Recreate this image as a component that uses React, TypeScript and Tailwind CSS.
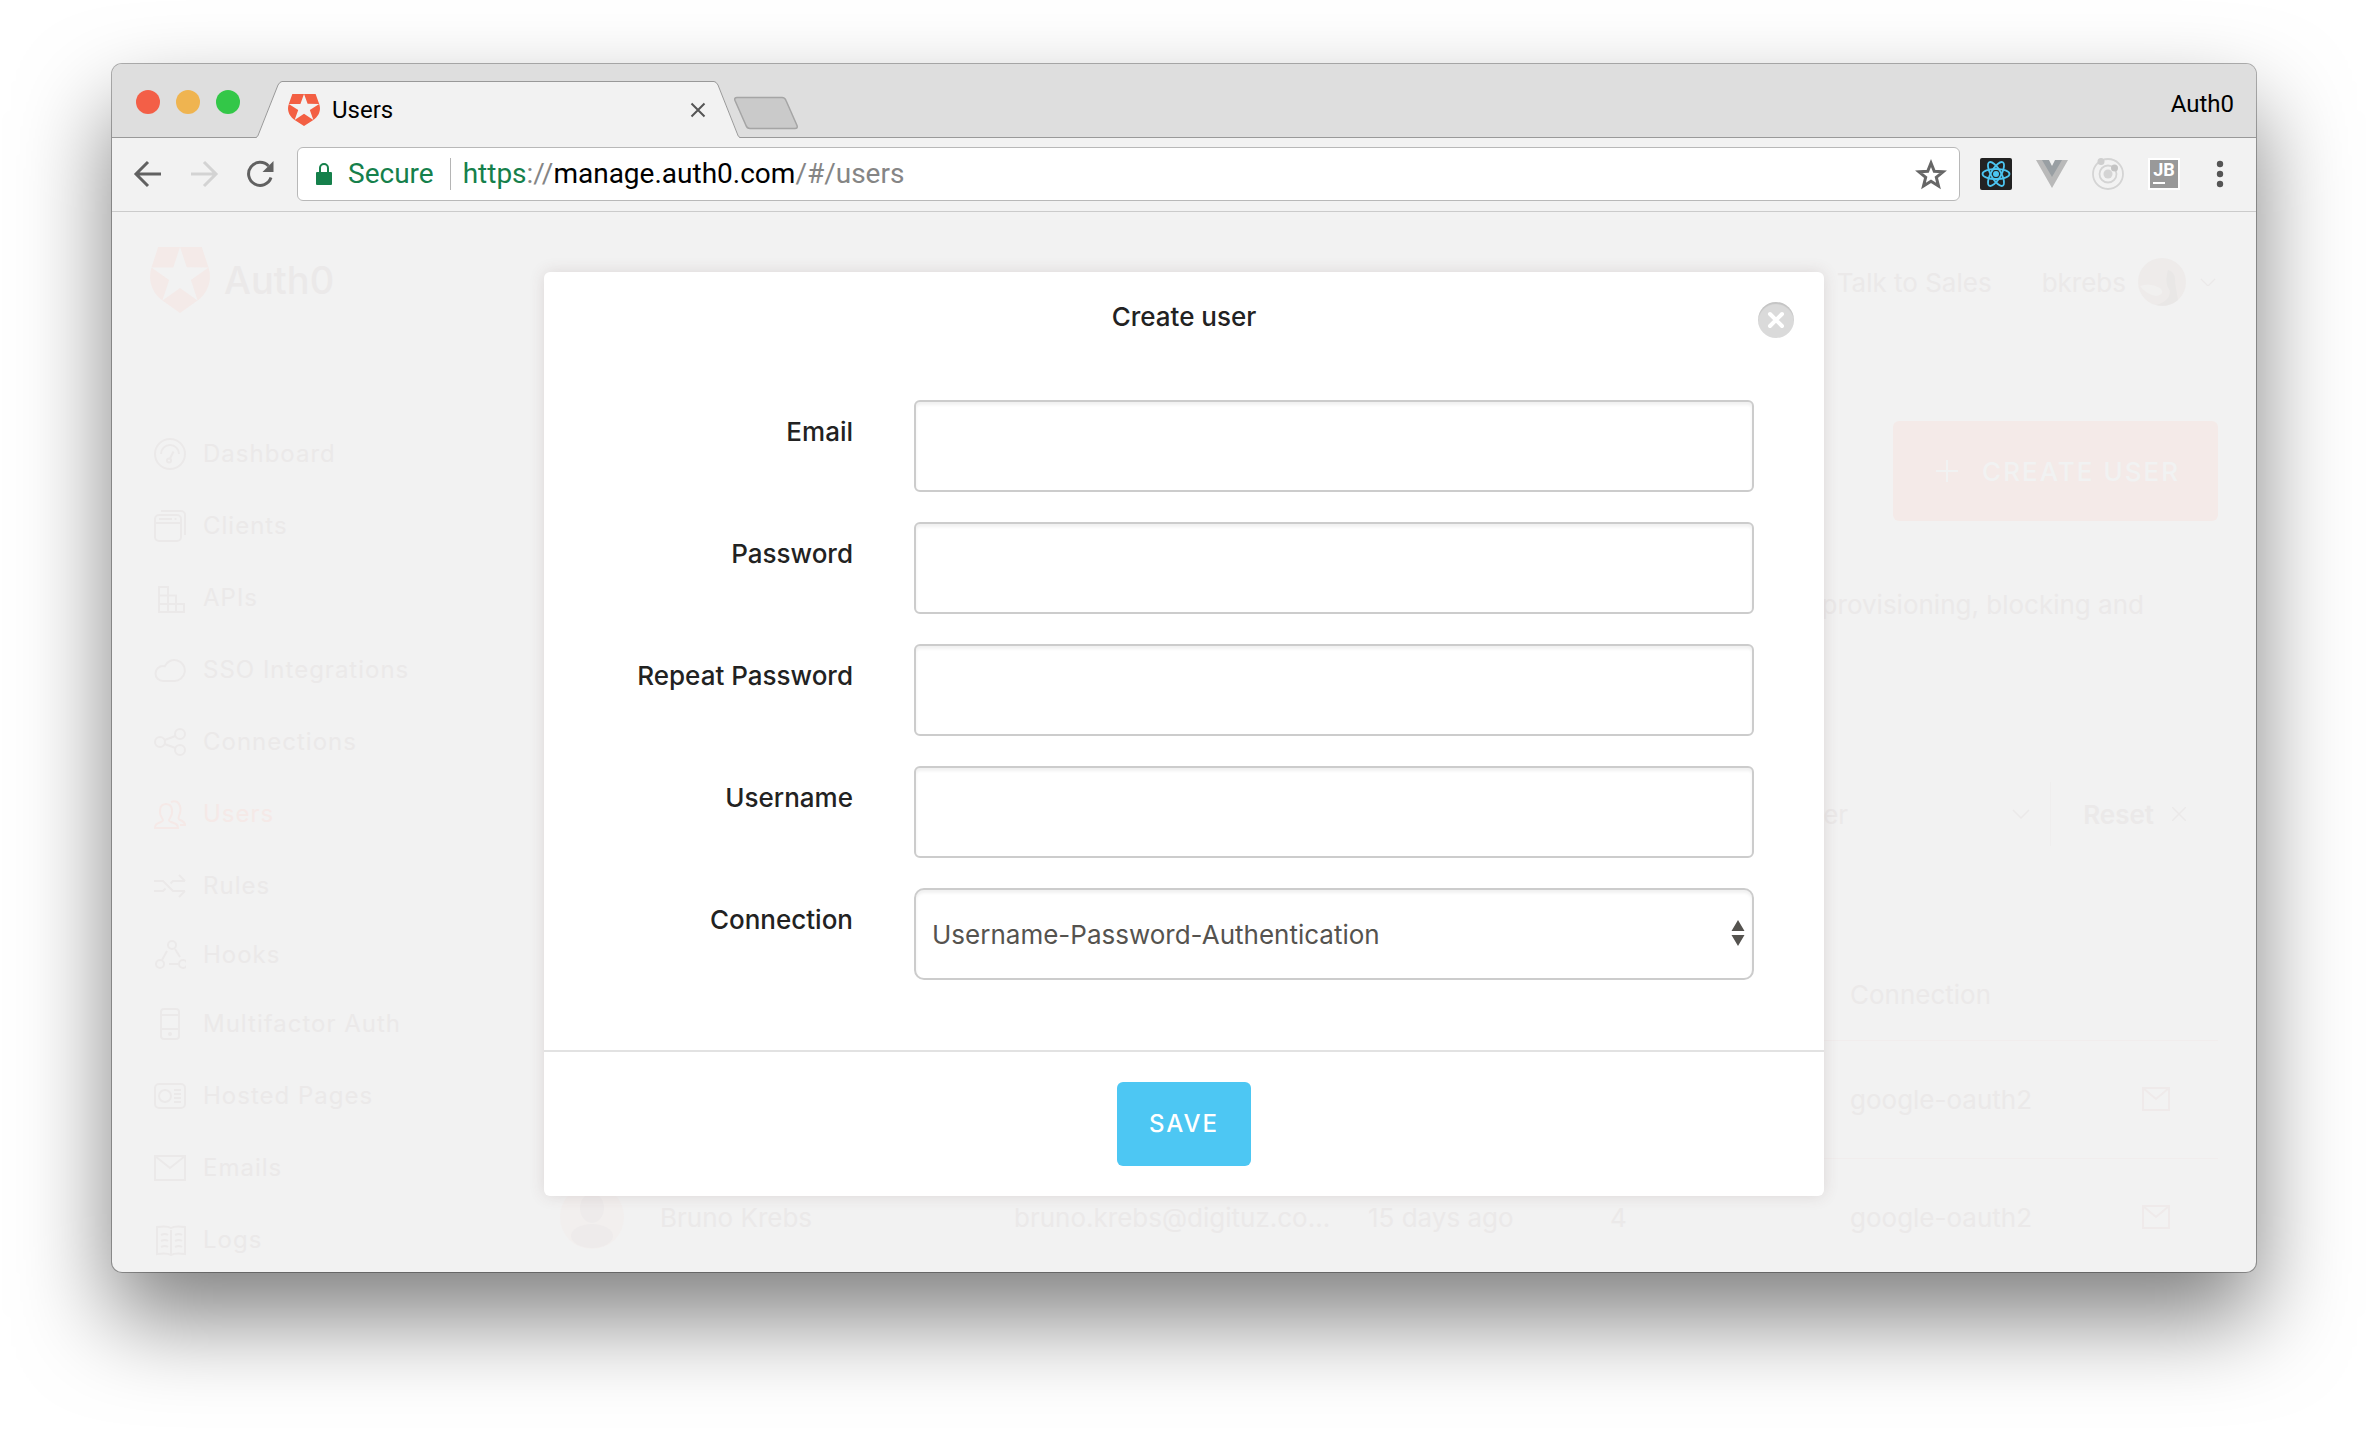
import { clsx } from "clsx";
import type { ReactNode } from "react";

interface NavItem {
  label: string;
  icon: ReactNode;
  active?: boolean;
  compact?: boolean;
}

interface UserRow {
  id: number;
  name: string;
  email?: string;
  latest: string;
  logins: number;
  connection: string;
}

const navItems: NavItem[] = [
  {
    label: "Dashboard",
    icon: (
      <>
        <circle cx="16" cy="16" r="15" />
        <path d="M7 16a9 9 0 0 1 18 0M19.500 13.500l-3.500 7" />
        <circle cx="15" cy="22.500" r="2" />
      </>
    ),
  },
  {
    label: "Clients",
    icon: (
      <>
        <rect x="1" y="5" width="26" height="26" rx="4" />
        <path d="M1 13h26M5 9h13M20.500 9h2M7 1h20a4 4 0 0 1 4 4v20" />
      </>
    ),
  },
  {
    label: "APIs",
    icon: <path d="M5 5h9v25H5zM5 13.500h17V30M5 22h25v8H5M14 13.500V30" />,
  },
  {
    label: "SSO Integrations",
    icon: <path d="M9 27a7.500 7.500 0 0 1 0-15c.6 0 1.200.1 1.700.3A10.500 10.500 0 1 1 20 27z" />,
  },
  {
    label: "Connections",
    icon: (
      <>
        <circle cx="6" cy="16" r="5" />
        <circle cx="26" cy="8" r="5" />
        <circle cx="26" cy="24" r="5" />
        <path d="M10.600 14l10.800-4M10.600 18l10.800 4" />
      </>
    ),
  },
  {
    label: "Users",
    active: true,
    icon: (
      <>
        <path d="M1 30c0-4 2-4.500 6-6 2.500-1 2.500-2 1-4-3-4-3.500-14 4-14s7 10 4 14c-1.500 2-1.500 3 1 4 4 1.500 7 2 7 6z" />
        <path d="M17 4c8-3 10.500 5 9 11-1 4-3 5.500 0 7 3 1.500 5 1.500 5 5h-5" />
      </>
    ),
  },
  {
    label: "Rules",
    icon: (
      <path d="M0 11h9l10 10h12M0 21h9l2.500-2.500M16.500 13.500L19 11h12M25 5l6 6M25 27l6-6" />
    ),
  },
  {
    label: "Hooks",
    compact: true,
    icon: (
      <>
        <circle cx="18" cy="6" r="4" />
        <circle cx="6" cy="25" r="4" />
        <circle cx="29" cy="25" r="4" />
        <path d="M13 12l-5 9M21 10l5 8M15 25h10" />
      </>
    ),
  },
  {
    label: "Multifactor Auth",
    icon: (
      <>
        <rect x="7" y="1" width="18" height="30" rx="3" />
        <path d="M7 7h18M7 21h18" />
        <circle cx="16" cy="26" r="1" />
      </>
    ),
  },
  {
    label: "Hosted Pages",
    icon: (
      <>
        <rect x="1" y="4" width="30" height="24" rx="4" />
        <circle cx="11" cy="16" r="6" />
        <path d="M20 10h7M20 14h7M20 18h7M20 22h7" />
      </>
    ),
  },
  {
    label: "Emails",
    icon: <path d="M1 4h30v24H1zM1 4l15 12L31 4" />,
  },
  {
    label: "Logs",
    icon: (
      <>
        <path d="M17 4c-3-2-7-2-14-1v27c7-1 11-1 14 1 3-2 7-2 14-1V3c-7-1-11-1-14 1zM17 6v24" />
        <path d="M7 11q4-2 7 0M7 17q4-2 7 0M7 23q4-2 7 0M21 11q4-2 7 0M21 17q4-2 7 0M21 23q4-2 7 0" />
      </>
    ),
  },
];

const users: UserRow[] = [
  {
    id: 1,
    name: "Bruno Krebs",
    latest: "2 days ago",
    logins: 12,
    connection: "google-oauth2",
  },
  {
    id: 2,
    name: "Bruno Krebs",
    email: "bruno.krebs@digituz.co...",
    latest: "15 days ago",
    logins: 4,
    connection: "google-oauth2",
  },
];

const fields = [
  { id: "email", label: "Email", type: "email" },
  { id: "password", label: "Password", type: "password" },
  { id: "repeat-password", label: "Repeat Password", type: "password" },
  { id: "username", label: "Username", type: "text" },
];

function Shield({ className }: { className?: string }) {
  return (
    <svg viewBox="1.500 0 21 24" preserveAspectRatio="none" fill="currentColor" className={className} aria-hidden="true">
      <path d="M21.980 7.448L19.620 0H4.347L2.020 7.448c-1.352 4.312.03 9.206 3.815 12.015L12.007 24l6.157-4.552c3.755-2.810 5.182-7.688 3.815-12.015l-6.160 4.580 2.343 7.450-6.157-4.597-6.158 4.580 2.358-7.433-6.188-4.550 7.630-.045L12.008 0l2.356 7.404 7.615.044z" />
    </svg>
  );
}

function Chevron({ className }: { className?: string }) {
  return (
    <svg viewBox="0 0 18 10" fill="none" stroke="currentColor" strokeWidth="1.500" className={className} aria-hidden="true">
      <path d="M1 1l8 8 8-8" />
    </svg>
  );
}

function TitleBar() {
  return (
    <div className="flex h-[74px] shrink-0 items-end bg-[#dedede] shadow-[inset_0_-1px_0_#999]">
      <div className="flex h-full w-36 items-center gap-4 pt-0.5 pl-6">
        <span className="size-6 rounded-full bg-[#f35f47]" />
        <span className="size-6 rounded-full bg-[#efb450]" />
        <span className="size-6 rounded-full bg-[#33c748]" />
      </div>

      <div className="flex h-[57px]">
        <svg width="26" height="57" viewBox="0 0 26 57" aria-hidden="true">
          <path d="M0 57L1 56 22 4Q24 .5 26 .5V57z" fill="#f2f2f2" />
          <path d="M0 56.500Q2 56 3 52L22 4Q24 .5 26 .5" fill="none" stroke="#999" />
        </svg>
        <div className="flex w-[432px] items-center border-t border-[#999] bg-[#f2f2f2] pl-1.5 pr-1">
          <Shield className="h-8 w-8 text-[#f35f43]" />
          <span className="ml-3 flex-1 text-2xl">Users</span>
          <button type="button" aria-label="Close tab" className="p-1 text-[#555]">
            <svg width="16" height="16" viewBox="0 0 16 16" fill="none" stroke="currentColor" strokeWidth="2" className="block">
              <path d="M1.500 1.500l13 13M14.500 1.500l-13 13" />
            </svg>
          </button>
        </div>
        <svg width="26" height="57" viewBox="0 0 26 57" aria-hidden="true">
          <path d="M26 57L25 56 4 4Q2 .5 0 .5V57z" fill="#f2f2f2" />
          <path d="M26 56.500Q24 56 23 52L4 4Q2 .5 0 .5" fill="none" stroke="#999" />
        </svg>
      </div>

      <button type="button" aria-label="New tab" className="mb-2 -ml-2">
        <svg width="68" height="34" viewBox="0 0 68 34" className="block">
          <path d="M5 1.500h45q3 0 4 3l11 25q1 3-2 3H18q-3 0-4-3L3 4.500q-1-3 2-3z" fill="#cacaca" stroke="#a5a5a5" strokeWidth="1.500" />
        </svg>
      </button>

      <span className="ml-auto flex h-full items-center pt-1.5 pr-[22px] text-2xl text-black">Auth0</span>
    </div>
  );
}

function Toolbar() {
  return (
    <div className="flex h-[74px] shrink-0 items-center border-b border-[#cbcbcb] bg-[#f2f2f2] pb-0.5 pl-5 pr-7">
      <div className="flex items-center gap-6">
        <button type="button" aria-label="Back" className="text-[#616161]">
          <svg width="32" height="32" viewBox="0 0 32 32" fill="none" stroke="currentColor" strokeWidth="3" className="block">
            <path d="M29 16H5M16 4L4 16l12 12" />
          </svg>
        </button>
        <button type="button" aria-label="Forward" className="text-[#d3d3d3]">
          <svg width="32" height="32" viewBox="0 0 32 32" fill="none" stroke="currentColor" strokeWidth="3" className="block">
            <path d="M3 16h24M16 4l12 12-12 12" />
          </svg>
        </button>
        <button type="button" aria-label="Reload" className="text-[#616161]">
          <svg width="32" height="32" viewBox="0 0 32 32" fill="none" stroke="currentColor" strokeWidth="3" className="block">
            <path d="M27 19.500A11.500 11.500 0 1 1 24.500 8" />
            <path d="M29.500 3v11h-11z" fill="currentColor" stroke="none" />
          </svg>
        </button>
      </div>

      <div className="ml-[21px] flex h-[54px] flex-1 items-center rounded-md border border-[#b8b8b8] bg-white pl-[18px] pr-3 text-[28px]">
        <svg width="16" height="24" viewBox="0 0 16 24" aria-hidden="true">
          <rect y="10" width="16" height="13" rx="1" fill="#15804b" />
          <path d="M4 11V6a4 4 0 0 1 8 0v5" fill="none" stroke="#15804b" strokeWidth="2" />
        </svg>
        <span className="ml-4 text-[#15804b]">Secure</span>
        <span className="mr-3 ml-4 h-8 w-px bg-[#b5b5b5]" />
        <span className="text-[#858585]">
          <span className="text-[#15804b]">https</span>://
          <span className="text-black">manage.auth0.com</span>/#/users
        </span>
        <button type="button" aria-label="Bookmark this page" className="ml-auto text-[#666]">
          <svg width="32" height="32" viewBox="0 0 32 32" fill="none" stroke="currentColor" strokeWidth="3" className="block">
            <path d="M16 5l3.300 8.200 8.800.6-6.800 5.600 2.200 8.600L16 23.300 8.500 28l2.200-8.600-6.800-5.600 8.800-.6z" />
          </svg>
        </button>
      </div>

      <div className="ml-5 flex items-center gap-6">
        <svg width="32" height="32" viewBox="0 0 32 32" aria-hidden="true">
          <rect width="32" height="32" rx="2" fill="#222" />
          <g fill="none" stroke="#4cc5f1" strokeWidth="1.800">
            <ellipse cx="16" cy="16" rx="13.500" ry="5" />
            <ellipse cx="16" cy="16" rx="13.500" ry="5" transform="rotate(60 16 16)" />
            <ellipse cx="16" cy="16" rx="13.500" ry="5" transform="rotate(120 16 16)" />
          </g>
          <circle cx="16" cy="16" r="3" fill="#4cc5f1" />
        </svg>
        <svg width="32" height="32" viewBox="0 0 32 32" aria-hidden="true">
          <path d="M0 2h12l4 7 4-7h12L16 30z" fill="#b9b9b9" />
          <path d="M6 2h7l3 6 3-6h7L16 19z" fill="#999fa3" />
        </svg>
        <svg width="32" height="32" viewBox="0 0 32 32" fill="none" stroke="#d4d4d4" strokeWidth="1.800" aria-hidden="true">
          <circle cx="16" cy="16" r="15" />
          <circle cx="16" cy="16" r="8.500" />
          <circle cx="16" cy="16" r="4.500" fill="#d4d4d4" stroke="none" />
          <circle cx="9" cy="3.500" r="3.500" fill="#cfcfcf" stroke="none" />
          <circle cx="22.500" cy="10" r="3.500" fill="#c4c4c4" stroke="none" />
        </svg>
        <span className="flex size-8 flex-col border-2 border-white bg-[#999] px-[3px] text-white">
          <span className="text-center text-[18px] leading-5 font-bold">JB</span>
          <span className="mt-0.5 h-0.5 w-3 bg-white" />
        </span>
      </div>
      <button type="button" aria-label="Menu" className="ml-8 px-1 text-[#555]">
        <svg width="8" height="28" viewBox="0 0 8 28" fill="currentColor" className="block">
          <circle cx="4" cy="4" r="3.200" />
          <circle cx="4" cy="14" r="3.200" />
          <circle cx="4" cy="24" r="3.200" />
        </svg>
      </button>
    </div>
  );
}

function PageHeader() {
  return (
    <header className="flex h-[140px] items-center pl-[38px] pr-10">
      <a href="#/" className="flex w-[411px] items-center gap-3.5 pb-1">
        <Shield className="h-[66px] w-[60px] text-[#f4eae8]" />
        <span className="text-[38px] font-medium">Auth0</span>
      </a>
      <label className="flex items-center gap-5">
        <svg width="20" height="20" viewBox="0 0 20 20" fill="none" stroke="currentColor" strokeWidth="2" aria-hidden="true">
          <circle cx="8" cy="8" r="7" />
          <path d="M13 13l6 6" />
        </svg>
        <input aria-label="Search" className="w-96" />
      </label>
      <div className="ml-auto flex items-center">
        <a href="#/sales">Talk to Sales</a>
        <button type="button" className="ml-[50px] flex items-center">
          bkrebs
          <svg width="48" height="48" viewBox="0 0 48 48" className="ml-3" aria-hidden="true">
            <circle cx="24" cy="24" r="24" fill="#eeebea" />
            <path d="M30 12q8 2 7 12l3 18q-10 8-22 5 14-4 14-14-6-8-2-21z" fill="#e9e7e6" />
            <path d="M2 28q10-4 20 2 6 6-4 8-10-2-16-10z" fill="#f1f0ef" />
          </svg>
          <Chevron className="ml-3.5 w-4" />
        </button>
      </div>
    </header>
  );
}

function Sidebar() {
  return (
    <nav className="w-[448px] shrink-0 pt-[66px] pl-[42px] text-2xl">
      {navItems.map((item) => (
        <a
          key={item.label}
          href="#/"
          className={clsx(
            "flex items-center gap-[17px] tracking-[1px]",
            item.compact ? "h-[66px]" : "h-[72px]",
            item.active && "text-[#f5e9e7]"
          )}
        >
          <svg width="32" height="32" viewBox="0 0 32 32" fill="none" stroke="currentColor" strokeWidth="2" aria-hidden="true">
            {item.icon}
          </svg>
          {item.label}
        </a>
      ))}
    </nav>
  );
}

function UsersPage() {
  return (
    <main className="min-w-0 flex-1 pt-[69px] pr-[38px]">
      <div className="flex h-[100px] items-center justify-between">
        <h1 className="text-5xl">Users</h1>
        <button
          type="button"
          className="flex h-full items-center gap-6 rounded-md bg-[#f4eae8] pl-[43px] pr-[38px] font-medium tracking-[2px] text-[#f1f2f2]"
        >
          <svg width="22" height="22" viewBox="0 0 22 22" stroke="currentColor" strokeWidth="2" aria-hidden="true">
            <path d="M11 0v22M0 11h22" />
          </svg>
          CREATE USER
        </button>
      </div>

      <p className="mt-16 pr-[74px] text-right leading-10">creating and provisioning, blocking and</p>

      <div className="mt-[157px] flex h-16 items-center justify-end">
        <button type="button" className="flex items-center">
          User
          <Chevron className="ml-[164px] w-[18px]" />
        </button>
        <span className="mr-8 ml-5 h-full w-px bg-[#efeeee]" />
        <button type="button" className="flex items-center gap-[18px] pr-8 font-semibold">
          Reset
          <svg width="14" height="14" viewBox="0 0 14 14" stroke="currentColor" strokeWidth="1.500" aria-hidden="true">
            <path d="M0 0l14 14M14 0L0 14" />
          </svg>
        </button>
      </div>

      <table className="mt-[76px] w-full table-fixed text-left">
        <thead>
          <tr className="h-[118px] border-b border-[#f1eded]">
            <th className="w-[100px]"></th>
            <th className="pt-7 font-normal">Name</th>
            <th className="w-[354px] pt-7 font-normal">Email</th>
            <th className="w-[242px] pt-7 font-normal">Latest Login</th>
            <th className="w-[240px] pt-7 font-normal">Logins</th>
            <th className="w-[292px] pt-7 font-normal">Connection</th>
            <th className="w-[76px]"></th>
          </tr>
        </thead>
        <tbody>
          {users.map((user) => (
            <tr key={user.id} className="h-[118px] border-b border-[#f1eded]">
              <td>
                <svg width="64" height="64" viewBox="0 0 64 64" aria-hidden="true">
                  <circle cx="32" cy="32" r="32" fill="#f2efee" />
                  <ellipse cx="32" cy="23" rx="12" ry="15" fill="#eeebeb" />
                  <ellipse cx="32" cy="51" rx="21" ry="12" fill="#eeebeb" />
                </svg>
              </td>
              <td>
                <a href="#/users">{user.name}</a>
              </td>
              <td className="whitespace-nowrap">{user.email}</td>
              <td>{user.latest}</td>
              <td>{user.logins}</td>
              <td>{user.connection}</td>
              <td>
                <svg width="28" height="24" viewBox="0 0 28 24" fill="none" stroke="#efeaea" strokeWidth="2" aria-hidden="true">
                  <path d="M1 1h26v22H1zM1 1l13 11L27 1" />
                </svg>
              </td>
            </tr>
          ))}
        </tbody>
      </table>
    </main>
  );
}

function CreateUserModal() {
  const controlClass =
    "h-[92px] w-full border-2 border-[#ccc] bg-white px-4 text-[#55534f] shadow-[inset_0_3px_3px_rgba(0,0,0,0.06)]";

  return (
    <form
      role="dialog"
      aria-labelledby="modal-title"
      className="w-full max-w-[1280px] rounded-md bg-white text-[#222] shadow-[0_0_16px_rgba(90,60,60,0.14)]"
    >
      <div className="relative flex h-24 items-center justify-center">
        <h2 id="modal-title" className="pb-2 font-medium">
          Create user
        </h2>
        <button
          type="button"
          aria-label="Close"
          className="absolute top-[30px] right-[30px] flex size-9 items-center justify-center rounded-full bg-[#dadada] text-white shadow-[inset_0_2px_1px_rgba(0,0,0,0.1)]"
        >
          <svg width="18" height="18" viewBox="0 0 18 18" fill="none" stroke="currentColor" strokeWidth="4" strokeLinecap="round">
            <path d="M3 3l12 12M15 3L3 15" />
          </svg>
        </button>
      </div>

      <div className="flex flex-col gap-[30px] pt-8 pr-[70px] pb-[70px]">
        {fields.map((field) => (
          <div key={field.id} className="grid grid-cols-[309px_1fr] gap-[61px]">
            <label htmlFor={field.id} className="pt-4 text-right leading-8 font-medium">
              {field.label}
            </label>
            <input id={field.id} type={field.type} className={clsx(controlClass, "rounded-md")} />
          </div>
        ))}
        <div className="grid grid-cols-[309px_1fr] gap-[61px]">
          <label htmlFor="connection" className="pt-4 text-right leading-8 font-medium">
            Connection
          </label>
          <div className="relative">
            <select id="connection" className={clsx(controlClass, "block appearance-none rounded-[10px]")}>
              <option>Username-Password-Authentication</option>
            </select>
            <svg width="14" height="26" viewBox="0 0 14 26" fill="#55534f" className="pointer-events-none absolute top-8 right-[9px]" aria-hidden="true">
              <path d="M7 0l6.500 11H.5zM7 26L.5 15h13z" />
            </svg>
          </div>
        </div>
      </div>

      <div className="flex justify-center border-t-2 border-[#e2e2e2] py-[30px]">
        <button type="submit" className="h-[84px] rounded-md bg-[#4dc7f3] px-8 text-2xl font-medium tracking-[2px] text-white">
          SAVE
        </button>
      </div>
    </form>
  );
}

export default function App() {
  return (
    <div className="flex h-screen min-h-[1200px] flex-col bg-white px-28 pt-16 pb-40 font-[Roboto,sans-serif]">
      <div className="flex min-h-0 flex-1 flex-col overflow-hidden rounded-[10px] bg-[#f2f2f2] shadow-[0_0_0_1px_rgba(0,0,0,0.3),0_46px_92px_rgba(0,0,0,0.5)]">
        <TitleBar />
        <Toolbar />
        <div className="relative min-h-0 flex-1 overflow-hidden font-[Inter,sans-serif] text-[26px] text-[#ebe9e9]">
          <PageHeader />
          <div className="flex">
            <Sidebar />
            <UsersPage />
          </div>
          <div className="absolute inset-0 flex items-start justify-center pt-[60px]">
            <CreateUserModal />
          </div>
        </div>
      </div>
    </div>
  );
}
